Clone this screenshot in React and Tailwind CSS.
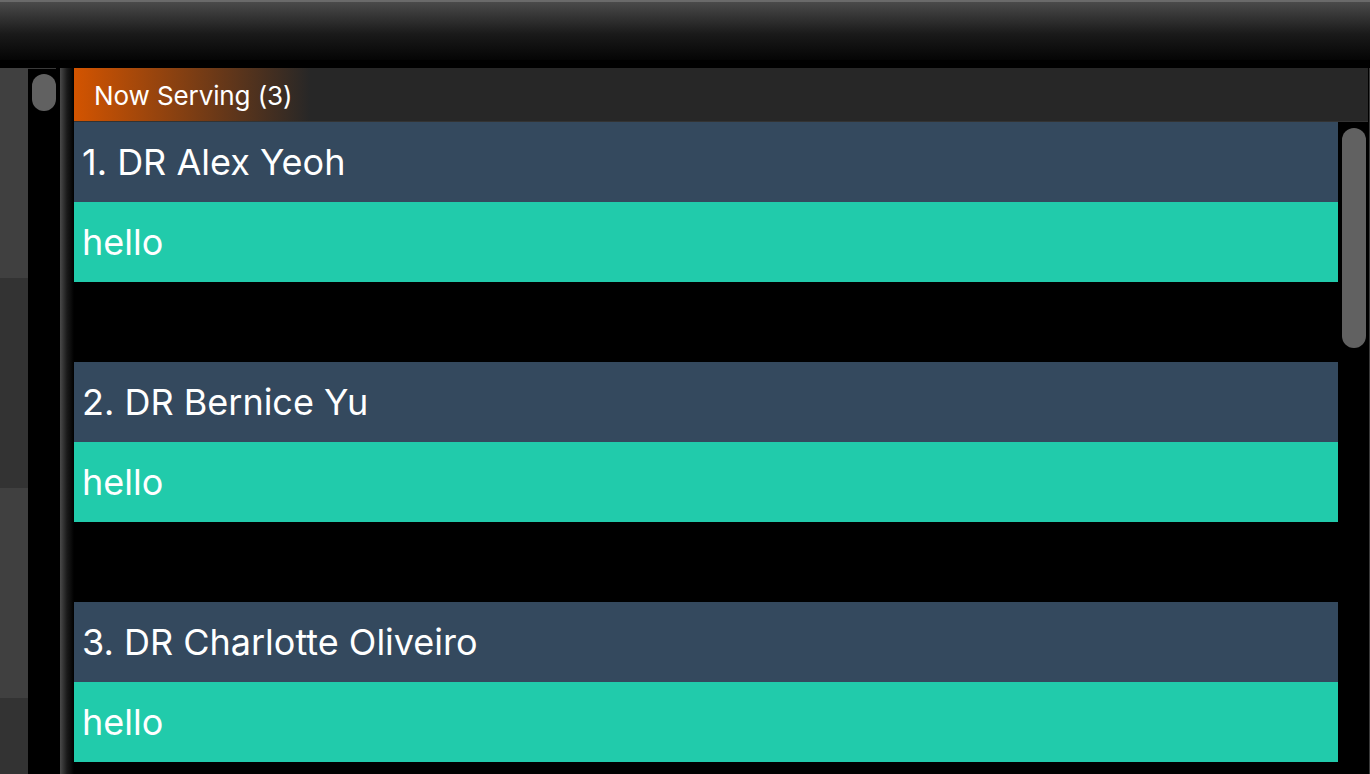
export default function App() {
  const font = { fontFamily: 'Inter, "Open Sans", sans-serif' };
  const people = ["1. DR Alex Yeoh", "2. DR Bernice Yu", "3. DR Charlotte Oliveiro"];
  return (
    <div className="w-[1370px] h-[774px] overflow-hidden bg-black flex flex-col" style={font}>
      {/* top bar */}
      <div className="h-[68px] shrink-0 flex flex-col">
        <div className="h-[2px] bg-[#6a6a6a]" />
        <div className="h-[58px] bg-[linear-gradient(to_bottom,#4a4a4a,#1a1a1a_55%,#050505)]" />
        <div className="h-[8px] bg-black" />
      </div>
      <div className="flex flex-1 min-h-0">
        {/* left panel */}
        <div className="w-[28px] flex flex-col">
          <div className="h-[210px] shrink-0 bg-[#404040]" />
          <div className="h-[210px] shrink-0 bg-[#333333]" />
          <div className="h-[210px] shrink-0 bg-[#404040]" />
          <div className="h-[210px] shrink-0 bg-[#333333]" />
        </div>
        <div className="w-[28px] bg-black border-t border-[#3a3a3a] pl-[4px] pt-[5px]">
          <div className="w-[24px] h-[37px] rounded-[12px] bg-[#616161]" />
        </div>
        <div className="w-[4px] bg-black" />
        <div className="w-[14px] bg-[linear-gradient(to_right,#4a4a4a,#1a1a1a_50%,#000)]" />
        {/* main */}
        <div className="w-[1294px] flex flex-col">
          <div className="h-[54px] shrink-0 bg-[#272727] border-b border-[#333] flex">
            <div className="w-[236px] h-full bg-[linear-gradient(to_right,#d35400,#272727)] flex items-center pl-[20px] pt-[2px]">
              <span className="text-white text-[26px] tracking-[-0.1px] whitespace-nowrap">Now Serving (3)</span>
            </div>
          </div>
          <div className="flex flex-1 min-h-0">
            <div className="w-[1264px] flex flex-col gap-[80px]">
              {people.map((p) => (
                <div key={p} className="flex flex-col">
                  <div className="h-[80px] bg-[#34495e] flex items-center pl-[8px] text-white text-[36px] whitespace-nowrap">
                    {p}
                  </div>
                  <div className="h-[80px] bg-[#21cbab] flex items-center pl-[8px] text-white text-[36px]">
                    hello
                  </div>
                </div>
              ))}
            </div>
            <div className="w-[30px] bg-black pl-[4px] pt-[6px]">
              <div className="w-[24px] h-[220px] rounded-[12px] bg-[#616161]" />
            </div>
          </div>
        </div>
        <div className="w-[1px] bg-black" />
        <div className="w-[1px] bg-[#3a3a3a]" />
      </div>
    </div>
  );
}
